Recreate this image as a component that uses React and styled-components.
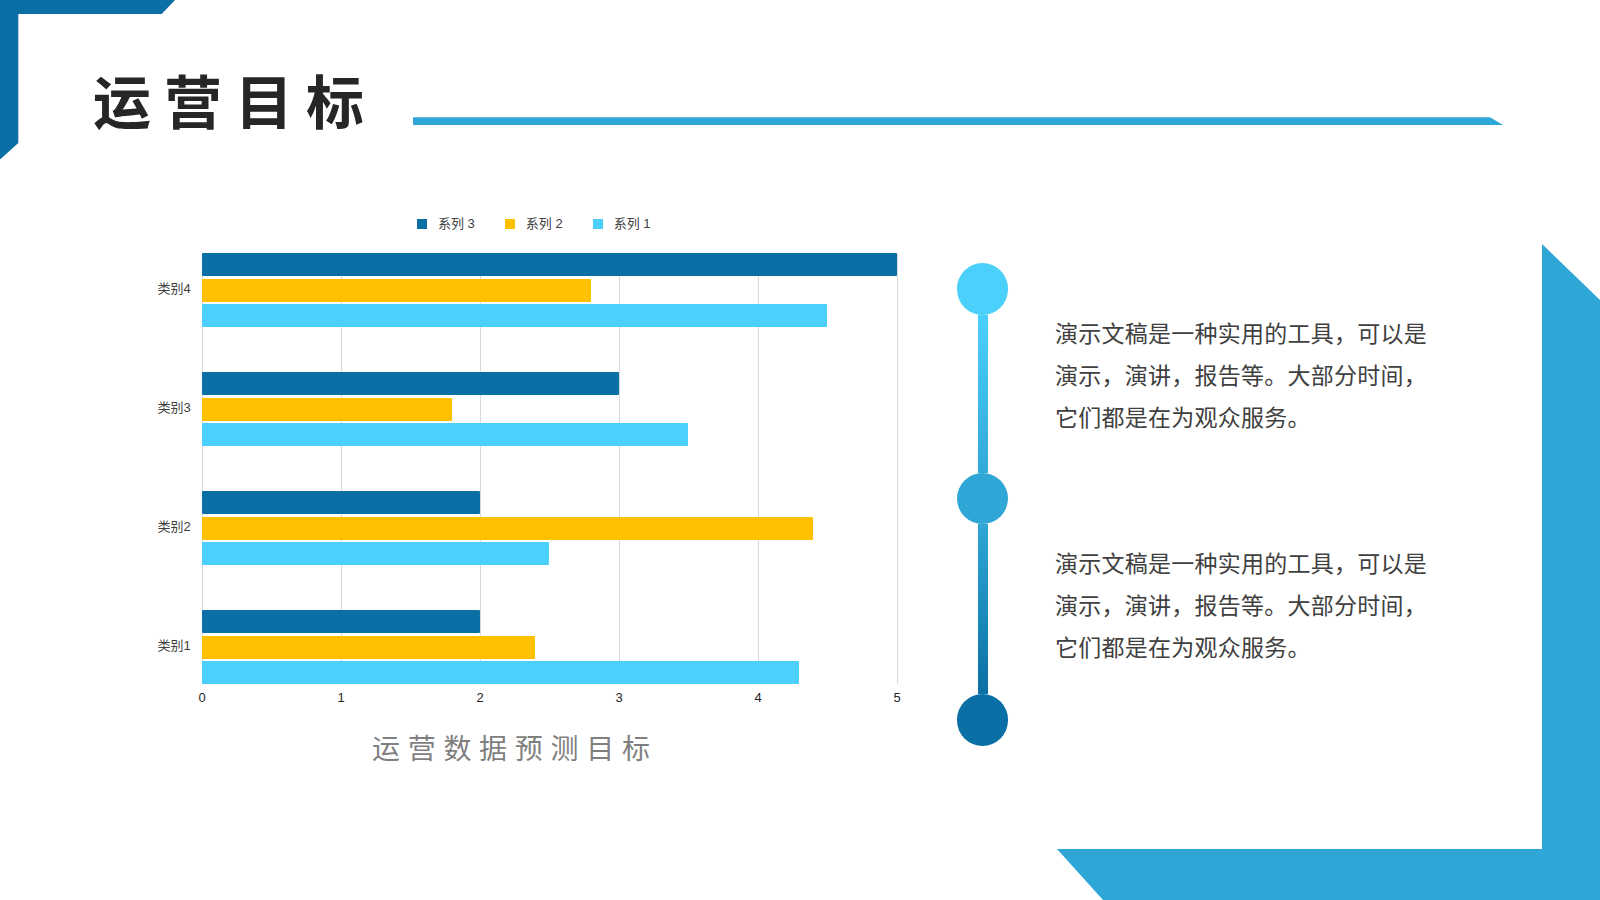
import React from "react";
import styled, { createGlobalStyle } from "styled-components";

const GlobalStyle = createGlobalStyle`
  html, body { margin: 0; padding: 0; background: #ffffff; }
  body { font-family: "Noto Sans CJK SC", "Noto Sans", sans-serif; }
  * { box-sizing: border-box; }
`;

const UNIT = 139;

const Page = styled.div`
  position: relative;
  width: 1600px;
  height: 900px;
  overflow: hidden;
  background: #ffffff;
  display: flex;
  flex-direction: column;
`;

const Frame = styled.svg`
  position: absolute;
  left: 0;
  top: 0;
  width: 1600px;
  height: 900px;
  pointer-events: none;
`;

const Header = styled.header`
  height: 140px;
  display: flex;
  align-items: flex-start;
  padding: 70px 0 0 93px;
`;

const Title = styled.h1`
  margin: 0;
  font-family: "Noto Sans CJK SC", sans-serif;
  font-weight: 700;
  font-size: 58px;
  line-height: 58px;
  letter-spacing: 13px;
  color: #262626;
  white-space: nowrap;
`;

const Rule = styled.div`
  flex: 1;
  height: 7.7px;
  margin: 47.3px 97px 0 36px;
  background: #2fa7d6;
  clip-path: polygon(0 0, calc(100% - 13px) 0, 100% 100%, 0 100%);
`;

const Content = styled.main`
  display: flex;
  align-items: flex-start;
  padding: 70px 0 0 150px;
`;

const Chart = styled.section`
  width: 747.7px;
  display: flex;
  flex-direction: column;
  font-family: "Liberation Sans", "Noto Sans CJK SC", sans-serif;
`;

const Legend = styled.div`
  display: flex;
  align-items: center;
  gap: 30px;
  height: 14px;
  margin: 7px 0 0 267px;
`;

const LegendItem = styled.div`
  display: flex;
  align-items: center;
  gap: 11px;
  font-size: 13px;
  line-height: 14px;
  color: #404040;
  white-space: nowrap;
`;

const Swatch = styled.span`
  width: 10px;
  height: 10px;
  background: ${(p) => p.$color};
`;

const PlotArea = styled.div`
  display: flex;
  margin-top: 22px;
`;

const Labels = styled.div`
  width: 51.7px;
  display: flex;
  flex-direction: column;
  gap: 45px;
`;

const CategoryLabel = styled.div`
  height: 74px;
  display: flex;
  align-items: center;
  justify-content: flex-end;
  padding: 0 11px 5px 0;
  font-size: 13px;
  color: #404040;
  white-space: nowrap;
`;

const Bars = styled.div`
  width: ${UNIT * 5 + 1}px;
  display: flex;
  flex-direction: column;
  gap: 45px;
  background-image: repeating-linear-gradient(
    to right,
    #d9d9d9 0px,
    #d9d9d9 1px,
    transparent 1px,
    transparent ${UNIT}px
  );
`;

const Group = styled.div`
  height: 74px;
  display: flex;
  flex-direction: column;
  gap: 2.5px;
`;

const Bar = styled.div`
  height: 23px;
  background: ${(p) => p.$color};
  border-radius: 1px;
`;

const Ticks = styled.div`
  width: ${UNIT * 5}px;
  margin: 6px 0 0 52.2px;
  display: flex;
  justify-content: space-between;
`;

const Tick = styled.span`
  width: 0;
  display: flex;
  justify-content: center;
  font-size: 13px;
  line-height: 16px;
  color: #262626;
  white-space: nowrap;
`;

const ChartCaption = styled.div`
  margin: 24px 0 0 222px;
  font-family: "Noto Sans CJK SC", sans-serif;
  font-size: 28px;
  line-height: 34px;
  letter-spacing: 7.7px;
  color: #7f7f7f;
  white-space: nowrap;
`;

const Timeline = styled.div`
  width: 51.4px;
  margin: 53.3px 0 0 59.3px;
  display: flex;
  flex-direction: column;
  align-items: center;
`;

const Dot = styled.div`
  width: 51.4px;
  height: 51.4px;
  border-radius: 50%;
  background: ${(p) => p.$color};
  flex-shrink: 0;
`;

const Segment = styled.div`
  width: 10px;
  height: ${(p) => p.$h}px;
  background: linear-gradient(to bottom, ${(p) => p.$from}, ${(p) => p.$to});
`;

const Notes = styled.div`
  margin: 101px 0 0 46.6px;
  display: flex;
  flex-direction: column;
  gap: 104px;
`;

const Note = styled.p`
  margin: 0;
  width: 380px;
  font-family: "Noto Sans CJK SC", sans-serif;
  font-size: 23px;
  line-height: 42px;
  letter-spacing: 0.25px;
  color: #404040;
`;

const COLORS = { s3: "#0a6fa4", s2: "#ffc000", s1: "#4bd0fb" };

const data = [
  { name: "类别4", s3: 5, s2: 2.8, s1: 4.5 },
  { name: "类别3", s3: 3, s2: 1.8, s1: 3.5 },
  { name: "类别2", s3: 2, s2: 4.4, s1: 2.5 },
  { name: "类别1", s3: 2, s2: 2.4, s1: 4.3 },
];

const noteText = "演示文稿是一种实用的工具，可以是演示，演讲，报告等。大部分时间，它们都是在为观众服务。";

export default function App() {
  return (
    <Page>
      <GlobalStyle />
      <Frame viewBox="0 0 1600 900">
        <polygon points="0,0 175,0 161.7,14 18.3,14 18.3,143 0,159.5" fill="#0a6fa4" />
        <polygon points="1542,244 1600,300 1600,900 1103,900 1057,849 1542,849" fill="#2fa7d6" />
      </Frame>
      <Header>
        <Title>运营目标</Title>
        <Rule />
      </Header>
      <Content>
        <Chart>
          <Legend>
            <LegendItem><Swatch $color={COLORS.s3} />系列 3</LegendItem>
            <LegendItem><Swatch $color={COLORS.s2} />系列 2</LegendItem>
            <LegendItem><Swatch $color={COLORS.s1} />系列 1</LegendItem>
          </Legend>
          <PlotArea>
            <Labels>
              {data.map((d) => (
                <CategoryLabel key={d.name}>{d.name}</CategoryLabel>
              ))}
            </Labels>
            <Bars>
              {data.map((d) => (
                <Group key={d.name}>
                  <Bar $color={COLORS.s3} style={{ width: d.s3 * UNIT }} />
                  <Bar $color={COLORS.s2} style={{ width: d.s2 * UNIT }} />
                  <Bar $color={COLORS.s1} style={{ width: d.s1 * UNIT }} />
                </Group>
              ))}
            </Bars>
          </PlotArea>
          <Ticks>
            {[0, 1, 2, 3, 4, 5].map((t) => (
              <Tick key={t}>{t}</Tick>
            ))}
          </Ticks>
          <ChartCaption>运营数据预测目标</ChartCaption>
        </Chart>
        <Timeline>
          <Dot $color="#4bd0fb" />
          <Segment $h={157.9} $from="#4bd0fb" $to="#31a9d9" />
          <Dot $color="#2fa7d6" />
          <Segment $h={170.3} $from="#2fa7d6" $to="#0a6fa4" />
          <Dot $color="#0a6fa4" />
        </Timeline>
        <Notes>
          <Note>{noteText}</Note>
          <Note>{noteText}</Note>
        </Notes>
      </Content>
    </Page>
  );
}
